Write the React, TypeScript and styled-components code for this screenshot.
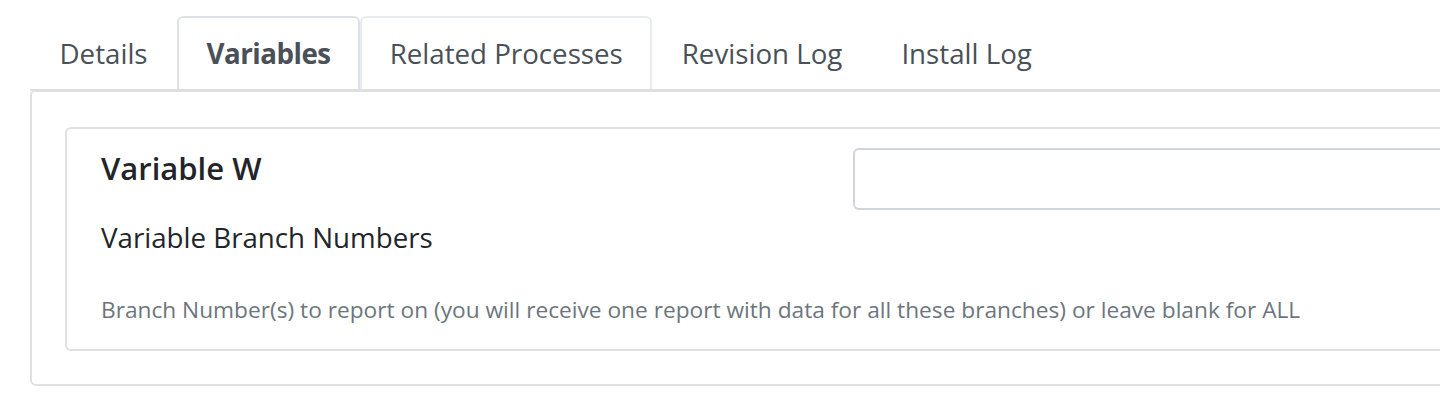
import React from "react";
import styled, { createGlobalStyle } from "styled-components";

const GlobalStyle = createGlobalStyle`
  html, body {
    margin: 0;
    padding: 0;
    background: #ffffff;
    overflow: hidden;
  }
  body {
    font-family: "Open Sans", "Noto Sans", "Liberation Sans", sans-serif;
    color: #212529;
  }
`;

const Page = styled.div`
  width: 1600px;
  padding: 16px 0 0 30px;
`;

const TabList = styled.ul`
  display: flex;
  list-style: none;
  margin: 0;
  padding: 0;
  border-bottom: 2px solid #dcdee1;
`;

const Tab = styled.li<{ $active?: boolean; $hover?: boolean }>`
  box-sizing: border-box;
  height: 73px;
  padding: 14.75px 27.5px;
  border: 2px solid
    ${(p) => (p.$active ? "#dee2e6" : p.$hover ? "#e9ecef" : "transparent")};
  border-bottom: none;
  border-radius: 6px 6px 0 0;
  background: #ffffff;
  font-size: 27.7px;
  line-height: 41.5px;
  font-weight: ${(p) => (p.$active ? 700 : 400)};
  letter-spacing: ${(p) => (p.$active ? "-0.5px" : "0")};
  color: #495057;
  white-space: nowrap;
  cursor: pointer;
`;

const Panel = styled.div`
  border: 2px solid #e0e0e0;
  border-top-width: 1px;
  border-radius: 4px 4px 6px 6px;
  padding: 35px 0 33px 33px;
`;

const Card = styled.div`
  border: 2px solid #e0e0e0;
  border-radius: 6px;
  padding: 19px 34px 23.5px 34px;
`;

const FieldRow = styled.div`
  display: grid;
  grid-template-columns: 752px 1fr;
  align-items: start;
`;

const Title = styled.h5`
  margin: 0;
  font-size: 31px;
  line-height: 40px;
  font-weight: 600;
  color: #212529;
`;

const Label = styled.label`
  display: block;
  margin-top: 29.4px;
  font-size: 27.7px;
  line-height: 40px;
  font-weight: 400;
  color: #212529;
`;

const Input = styled.input`
  box-sizing: border-box;
  display: block;
  width: 100%;
  height: 62px;
  border: 2px solid #ced4da;
  border-radius: 6px;
  background: #ffffff;
  font-family: inherit;
  font-size: 27.7px;
  padding: 0 20px;
  outline: none;
`;

const Help = styled.div`
  margin-top: 38px;
  font-size: 22.7px;
  line-height: 30px;
  color: #6c757d;
  white-space: nowrap;
`;

const tabs = ["Details", "Variables", "Related Processes", "Revision Log", "Install Log"];

export default function App() {
  return (
    <>
      <GlobalStyle />
      <Page>
        <TabList>
          {tabs.map((t) => (
            <Tab key={t} $active={t === "Variables"} $hover={t === "Related Processes"}>
              {t}
            </Tab>
          ))}
        </TabList>
        <Panel>
          <Card>
            <FieldRow>
              <div>
                <Title>Variable W</Title>
                <Label htmlFor="branches">Variable Branch Numbers</Label>
              </div>
              <Input id="branches" type="text" />
            </FieldRow>
            <Help>
              Branch Number(s) to report on (you will receive one report with data for all these
              branches) or leave blank for ALL
            </Help>
          </Card>
        </Panel>
      </Page>
    </>
  );
}
